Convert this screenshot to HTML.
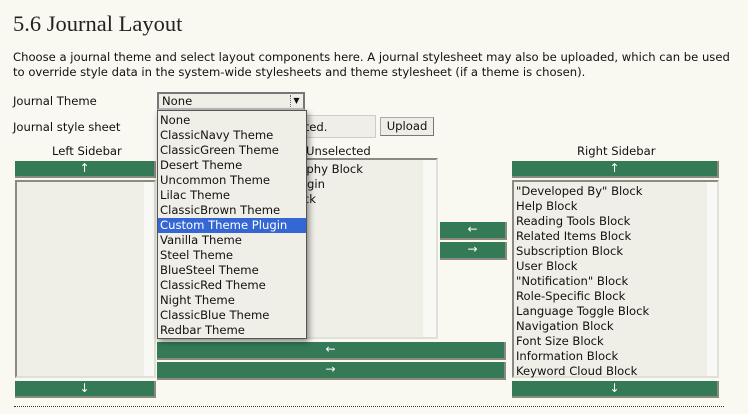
<!DOCTYPE html>
<html><head><style>
*{margin:0;padding:0;box-sizing:border-box}
body{width:748px;height:414px;background:#f9f9f1;font-family:"DejaVu Sans",Verdana,sans-serif;font-size:11.6px;color:#111;position:relative;overflow:hidden}
.a{position:absolute;white-space:nowrap}
.g{position:absolute;background:#357a57;color:#fff;text-align:center;border-right:2px solid #8a8a80;border-bottom:2px solid #8a8a80;font-size:12px;line-height:14px}
.box{position:absolute;background:#efeee7;border:2px solid #8a8a80;border-right-color:#e0e0d8;border-bottom-color:#e0e0d8}
.sb{position:absolute;top:0;bottom:0;right:0;width:10px;background:#f8f8f4}
.it{line-height:15px;padding-left:2px}
</style></head><body>
<div class="a" style="left:13px;top:11px;font-family:'Liberation Serif',serif;font-size:22.5px;color:#222">5.6 Journal Layout</div>
<div class="a" style="left:13px;top:50px;line-height:15px">Choose a journal theme and select layout components here. A journal stylesheet may also be uploaded, which can be used<br>to override style data in the system-wide stylesheets and theme stylesheet (if a theme is chosen).</div>
<div class="a" style="left:13px;top:94px">Journal Theme</div>
<div class="a" style="left:13px;top:120px">Journal style sheet</div>
<div class="a" style="left:300px;top:115px;width:76px;height:23px;background:#efeee7;border:1px solid #ccc"></div>
<div class="a" style="left:234px;top:120px">No file selected.</div>
<div class="a" style="left:380px;top:117px;width:54px;height:19px;background:#eeede6;border:1px solid #aaa;border-right-color:#777;border-bottom-color:#777;text-align:center;line-height:16px">Upload</div>
<div class="a" style="left:52px;top:144px">Left Sidebar</div>
<div class="a" style="left:577px;top:144px">Right Sidebar</div>
<div class="g" style="left:15px;top:161px;width:141px;height:17px">↑</div>
<div class="box" style="left:15px;top:180px;width:141px;height:198px"><div class="sb"></div></div>
<div class="g" style="left:15px;top:381px;width:141px;height:17px">↓</div>
<div class="a" style="left:306px;top:144px">Unselected</div>
<div class="box" style="left:157px;top:158px;width:281px;height:181px;overflow:hidden;border-left:0"><div class="sb" style="width:13px"></div></div>
<div class="a" style="right:385px;top:162px">Bibliography Block</div>
<div class="a" style="right:423px;top:177px">Developed Plugin</div>
<div class="a" style="right:432px;top:192px">Web Block</div>
<div class="g" style="left:157px;top:342px;width:349px;height:18px">←</div>
<div class="g" style="left:157px;top:362px;width:349px;height:18px">→</div>
<div class="g" style="left:440px;top:222px;width:67px;height:18px">←</div>
<div class="g" style="left:440px;top:242px;width:67px;height:18px">→</div>
<div class="g" style="left:512px;top:161px;width:207px;height:17px">↑</div>
<div class="box" style="left:512px;top:180px;width:207px;height:198px;padding-top:2px"><div class="sb"></div>
<div class="it">"Developed By" Block</div><div class="it">Help Block</div><div class="it">Reading Tools Block</div><div class="it">Related Items Block</div><div class="it">Subscription Block</div><div class="it">User Block</div><div class="it">"Notification" Block</div><div class="it">Role-Specific Block</div><div class="it">Language Toggle Block</div><div class="it">Navigation Block</div><div class="it">Font Size Block</div><div class="it">Information Block</div><div class="it">Keyword Cloud Block</div></div>
<div class="g" style="left:512px;top:381px;width:207px;height:17px">↓</div>
<div class="a" style="left:14px;top:406px;width:710px;border-top:1px dotted #333"></div>
<div class="a" style="left:157px;top:92px;width:148px;height:18px;background:#efeee7;border:2px solid #777;border-bottom-color:#bbb;padding-left:3px;line-height:14px">None
<div style="position:absolute;right:1px;top:1px;width:12px;height:12px;border-left:1px dotted #666;font-size:8px;text-align:center;line-height:12px">▼</div></div>
<div class="a" style="left:157px;top:110px;width:150px;height:229px;background:#efeee7;border:1px solid #555;box-shadow:2px 3px 6px rgba(0,0,0,.45);padding-top:2px">
<div class="it">None</div><div class="it">ClassicNavy Theme</div><div class="it">ClassicGreen Theme</div><div class="it">Desert Theme</div><div class="it">Uncommon Theme</div><div class="it">Lilac Theme</div><div class="it">ClassicBrown Theme</div><div class="it" style="background:#3467d3;color:#fff">Custom Theme Plugin</div><div class="it">Vanilla Theme</div><div class="it">Steel Theme</div><div class="it">BlueSteel Theme</div><div class="it">ClassicRed Theme</div><div class="it">Night Theme</div><div class="it">ClassicBlue Theme</div><div class="it">Redbar Theme</div></div>
</body></html>
